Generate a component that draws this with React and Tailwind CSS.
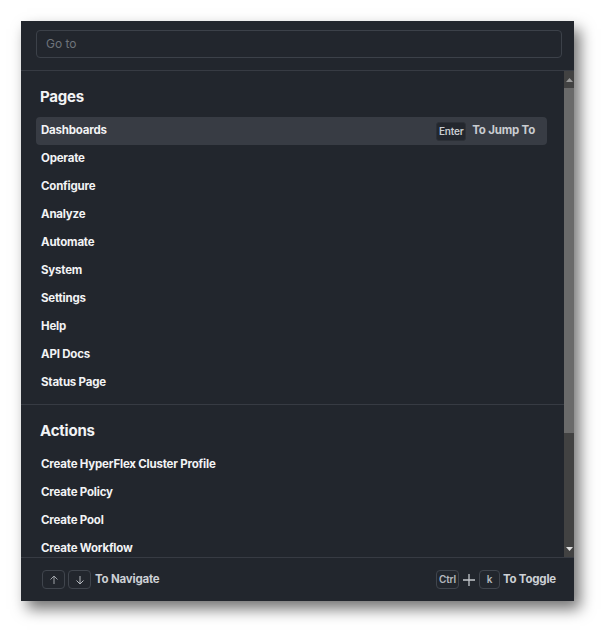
import React from "react";

const pages = ["Dashboards","Operate","Configure","Analyze","Automate","System","Settings","Help","API Docs","Status Page"];
const actions = ["Create HyperFlex Cluster Profile","Create Policy","Create Pool","Create Workflow"];

function Row({ label, active }) {
  return (
    <div className={`flex h-[28px] items-center justify-between rounded-[4px] pl-[5px] pr-[12px] ${active ? "bg-[#383c44]" : ""}`}>
      <span className="text-[11.5px] font-bold tracking-[-0.2px] text-[#f2f3f5]">{label}</span>
      {active && (
        <div className="flex items-center gap-[6px]">
          <span className="flex h-[19px] w-[30px] items-center justify-center rounded-[3px] border border-[#2c3037] bg-[#23272e] text-[10px] font-semibold tracking-[-0.2px] text-[#c9ccd1]">Enter</span>
          <span className="text-[11.5px] font-bold tracking-[-0.2px] text-[#c9ccd1]">To Jump To</span>
        </div>
      )}
    </div>
  );
}

function Kbd({ children, w }) {
  return (
    <span className={`flex h-[19px] ${w} items-center justify-center rounded-[4px] border border-[#40454d] text-[10px] font-semibold tracking-[-0.2px] text-[#b4b8be]`}>{children}</span>
  );
}

export default function App() {
  return (
    <div className="h-[643px] w-[616px] bg-white pl-[21px] pt-[21px]" style={{ fontFamily: "Inter, 'Noto Sans', sans-serif" }}>
      <div className="flex h-[580px] w-[553px] flex-col bg-[#22262d] shadow-[6px_8px_14px_rgba(0,0,0,0.55)]">
        <div className="flex h-[50px] shrink-0 items-start border-b border-[#373b43] pl-[15px] pr-[12px] pt-[9px]">
          <div className="flex h-[28px] flex-1 items-center rounded-[4px] border border-[#3c4149] px-[9px] text-[12px] text-[#6f747b]">Go to</div>
        </div>
        <div className="flex h-[486px] shrink-0 overflow-hidden">
          <div className="flex-1 overflow-hidden">
            <div className="pl-[15px] pr-[17px]">
              <div className="mt-[16px] mb-[10px] flex h-[20px] items-center pl-[4px] text-[15px] font-bold tracking-[-0.2px] text-[#f2f3f5]">Pages</div>
              {pages.map((p, i) => <Row key={p} label={p} active={i === 0} />)}
            </div>
            <div className="mt-[7px] h-px bg-[#373b43]" />
            <div className="pl-[15px] pr-[17px]">
              <div className="mt-[16px] mb-[10px] flex h-[20px] items-center pl-[4px] text-[15px] font-bold tracking-[-0.2px] text-[#f2f3f5]">Actions</div>
              {actions.map((p) => <Row key={p} label={p} />)}
            </div>
          </div>
          <div className="flex w-[10px] flex-col bg-[#424242]">
            <div className="flex h-[17px] items-center justify-center">
              <svg width="7" height="4" viewBox="0 0 7 4"><path d="M0 4 L3.5 0 L7 4 Z" fill="#9a9a9a" /></svg>
            </div>
            <div className="h-[345px] bg-[#6a6a6a]" />
            <div className="flex-1" />
            <div className="flex h-[17px] items-center justify-center">
              <svg width="7" height="4" viewBox="0 0 7 4"><path d="M0 0 L3.5 4 L7 0 Z" fill="#e0e0e0" /></svg>
            </div>
          </div>
        </div>
        <div className="flex flex-1 items-center justify-between border-t border-[#373b43] pl-[21px] pr-[18px]">
          <div className="flex items-center gap-[3px]">
            <Kbd w="w-[23px]">
              <svg width="10" height="10" viewBox="0 0 10 10" fill="none" stroke="#9ea2a8" strokeWidth="1"><path d="M5 9V1M1.5 4.5L5 1l3.5 3.5" /></svg>
            </Kbd>
            <Kbd w="w-[23px]">
              <svg width="10" height="10" viewBox="0 0 10 10" fill="none" stroke="#b4b8be" strokeWidth="1"><path d="M5 1v8M1.5 5.5L5 9l3.5-3.5" /></svg>
            </Kbd>
            <span className="ml-[1px] text-[11.5px] font-bold tracking-[-0.2px] text-[#cdd0d5]">To Navigate</span>
          </div>
          <div className="flex items-center">
            <Kbd w="w-[23px]">Ctrl</Kbd>
            <svg className="mx-[3px]" width="14" height="14" viewBox="0 0 14 14" fill="none" stroke="#c4c7cc" strokeWidth="1.3"><path d="M7 1v12M1 7h12" /></svg>
            <Kbd w="w-[21px]">k</Kbd>
            <span className="ml-[3px] text-[11.5px] font-bold tracking-[-0.2px] text-[#cdd0d5]">To Toggle</span>
          </div>
        </div>
      </div>
    </div>
  );
}
